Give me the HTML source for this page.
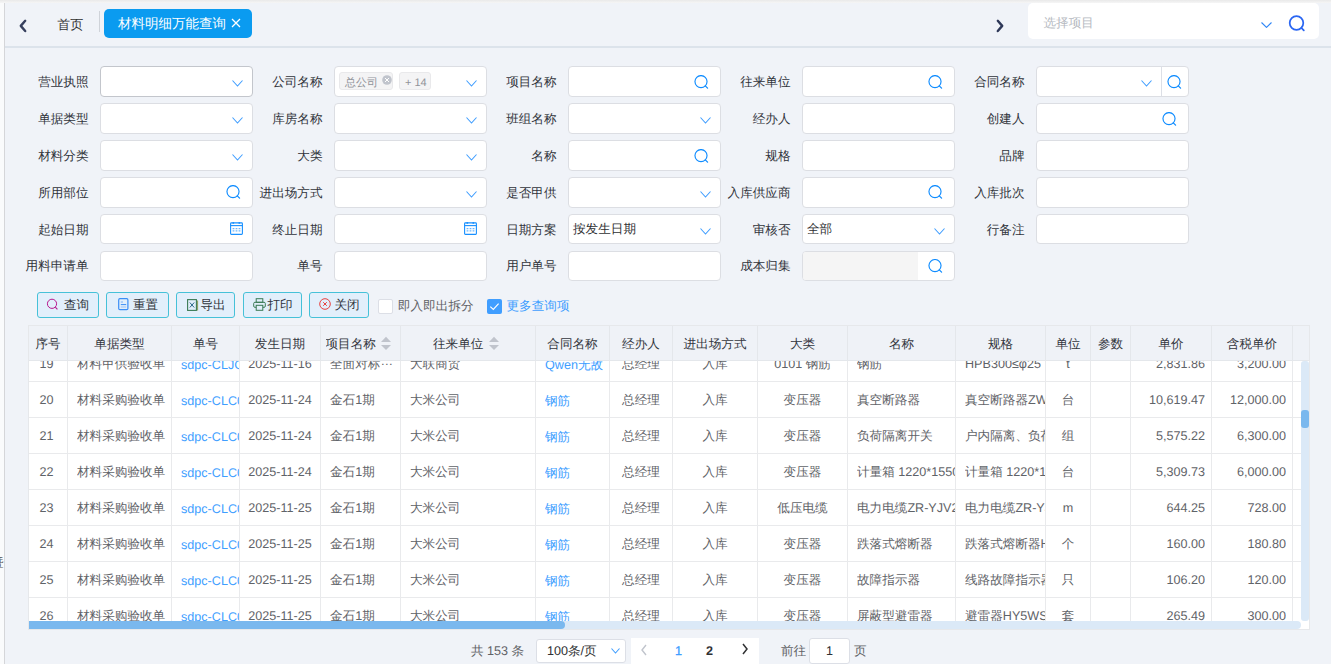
<!DOCTYPE html>
<html><head><meta charset="utf-8"><title>材料明细万能查询</title>
<style>
*{box-sizing:border-box;margin:0;padding:0}
html,body{width:1331px;height:664px;overflow:hidden}
body{text-rendering:geometricPrecision;position:relative;background:#f0f3f8;font-family:"Liberation Sans", sans-serif;font-size:12.6px;color:#3b3f46}
.a{position:absolute}
.c{}
.lbl{position:absolute;text-align:right;white-space:nowrap;font-size:12.6px;color:#30343b;line-height:16px}
.inp{position:absolute;width:153px;height:30.6px;background:#fff;border:1px solid #dcdee3;border-radius:4px}
.th{position:absolute;top:0.8px;height:35px;line-height:35px;text-align:center;color:#33363e;font-size:12.6px;white-space:nowrap;overflow:hidden}
.td{position:absolute;height:36px;line-height:36px;color:#5f6368;font-size:12.6px;white-space:nowrap;overflow:hidden}
.btn{position:absolute;top:292px;height:26px;background:#e2effb;border:1px solid #46c1d8;border-radius:3px;color:#3b3f46;font-size:12.6px;line-height:24px;white-space:nowrap}
</style></head><body>

<div class="a" style="left:0;top:0;width:1331px;height:3px;background:linear-gradient(#e9e9e9,#f6f6f6)"></div>
<div class="a" style="left:0;top:3px;width:4px;height:661px;background:#fafbfc"></div>
<div class="a" style="left:4px;top:3px;width:1px;height:661px;background:#d5d6d9"></div>
<div class="a" style="left:5px;top:46px;width:1326px;height:2px;background:#dce3eb"></div>
<svg class="a" style="left:18px;top:19px" width="10" height="14" viewBox="0 0 10 14"><polyline points="7.2,1.8 2.8,6.9 7.2,12" fill="none" stroke="#37405e" stroke-width="2.4" stroke-linecap="round" stroke-linejoin="round"/></svg>
<div class="a" style="left:57.3px;top:16.3px;font-size:13px;line-height:18px;color:#333"><span class="c">首页</span></div>
<div class="a" style="left:99px;top:11px;width:1px;height:21px;background:#cfd3d9"></div>
<div class="a" style="left:104px;top:9px;width:148px;height:29px;background:#0a9bf0;border-radius:5px"></div>
<div class="a" style="left:118px;top:15px;font-size:13.5px;line-height:18px;color:#fff;white-space:nowrap"><span class="c">材料明细万能查询</span></div>
<svg class="a" style="left:231px;top:18px" width="10" height="10" viewBox="0 0 10 10"><path d="M1 1L9 9M9 1L1 9" stroke="#fff" stroke-width="1.3"/></svg>
<svg class="a" style="left:995px;top:19px" width="10" height="14" viewBox="0 0 10 14"><polyline points="2.8,1.8 7.2,6.9 2.8,12" fill="none" stroke="#2e3858" stroke-width="2.4" stroke-linecap="round" stroke-linejoin="round"/></svg>
<div class="a" style="left:1028px;top:3px;width:291px;height:36px;background:#fff;border-radius:5px"></div>
<div class="a" style="left:1043.5px;top:14.3px;font-size:12.6px;line-height:18px;color:#b6bac1"><span class="c">选择项目</span></div>
<svg style="position:absolute;left:1261px;top:21.6px" width="11" height="6.4" viewBox="0 0 11 6.4"><polyline points="0.5,0.5 5.5,5.4 10.5,0.5" fill="none" stroke="#2f86f6" stroke-width="1.1"/></svg>
<svg class="a" style="left:1287.6px;top:14.8px" width="19" height="19" viewBox="0 0 19 19"><circle cx="8.5" cy="8" r="6.8" fill="none" stroke="#2a66f2" stroke-width="1.75"/><line x1="13.5" y1="13" x2="15.8" y2="15.4" stroke="#2a66f2" stroke-width="1.8" stroke-linecap="round"/></svg>
<div class="lbl" style="left:-20px;width:108.5px;top:73.89999999999999px"><span class="c">营业执照</span></div>
<div class="inp" style="left:100px;top:66.3px;border-color:#c3c6cc"></div>
<svg style="position:absolute;left:232px;top:80.3px" width="11" height="7" viewBox="0 0 11 7"><polyline points="0.5,0.5 5.5,6 10.5,0.5" fill="none" stroke="#409eff" stroke-width="1.1"/></svg>
<div class="lbl" style="left:214px;width:108.5px;top:73.89999999999999px"><span class="c">公司名称</span></div>
<div class="inp" style="left:334px;top:66.3px;border-color:#dcdee3"></div>
<div class="a" style="left:339px;top:72.3px;width:54px;height:18px;background:#f4f4f5;border:1px solid #e9e9eb;border-radius:3px"></div>
<div class="a" style="left:345px;top:75.3px;font-size:11px;line-height:16px;color:#909399"><span class="c">总公司</span></div>
<svg class="a" style="left:382px;top:75.3px" width="10" height="10" viewBox="0 0 10 10"><circle cx="5" cy="5" r="4.8" fill="#c0c4cc"/><path d="M3 3L7 7M7 3L3 7" stroke="#fff" stroke-width="1"/></svg>
<div class="a" style="left:399px;top:72.3px;width:32px;height:18px;background:#f4f4f5;border:1px solid #e9e9eb;border-radius:3px"></div>
<div class="a" style="left:405px;top:75.3px;font-size:11px;line-height:16px;color:#909399">+ 14</div>
<svg style="position:absolute;left:466px;top:80.3px" width="11" height="7" viewBox="0 0 11 7"><polyline points="0.5,0.5 5.5,6 10.5,0.5" fill="none" stroke="#409eff" stroke-width="1.1"/></svg>
<div class="lbl" style="left:448px;width:108.5px;top:73.89999999999999px"><span class="c">项目名称</span></div>
<div class="inp" style="left:568px;top:66.3px;border-color:#dcdee3"></div>
<svg style="position:absolute;left:694.3px;top:74.7px" width="16" height="16" viewBox="0 0 16 16"><circle cx="7.0" cy="6.6" r="6.05" fill="none" stroke="#0f8cff" stroke-width="1.15"/><line x1="11.277954999999999" y1="10.877955" x2="13.577955" y2="13.177955" stroke="#0f8cff" stroke-width="1.25" stroke-linecap="round"/></svg>
<div class="lbl" style="left:682px;width:108.5px;top:73.89999999999999px"><span class="c">往来单位</span></div>
<div class="inp" style="left:802px;top:66.3px;border-color:#dcdee3"></div>
<svg style="position:absolute;left:928.3px;top:74.7px" width="16" height="16" viewBox="0 0 16 16"><circle cx="7.0" cy="6.6" r="6.05" fill="none" stroke="#0f8cff" stroke-width="1.15"/><line x1="11.277954999999999" y1="10.877955" x2="13.577955" y2="13.177955" stroke="#0f8cff" stroke-width="1.25" stroke-linecap="round"/></svg>
<div class="lbl" style="left:916px;width:108.5px;top:73.89999999999999px"><span class="c">合同名称</span></div>
<div class="inp" style="left:1036px;top:66.3px;border-color:#dcdee3"></div>
<div class="a" style="left:1161px;top:66.3px;width:1px;height:30px;background:#dcdfe6"></div>
<svg style="position:absolute;left:1141px;top:80.3px" width="11" height="7" viewBox="0 0 11 7"><polyline points="0.5,0.5 5.5,6 10.5,0.5" fill="none" stroke="#409eff" stroke-width="1.1"/></svg>
<svg style="position:absolute;left:1167px;top:74.5px" width="16" height="16" viewBox="0 0 16 16"><circle cx="7.0" cy="6.6" r="6.05" fill="none" stroke="#0f8cff" stroke-width="1.15"/><line x1="11.277954999999999" y1="10.877955" x2="13.577955" y2="13.177955" stroke="#0f8cff" stroke-width="1.25" stroke-linecap="round"/></svg>
<div class="lbl" style="left:-20px;width:108.5px;top:110.8px"><span class="c">单据类型</span></div>
<div class="inp" style="left:100px;top:103.2px;border-color:#dcdee3"></div>
<svg style="position:absolute;left:232px;top:117.2px" width="11" height="7" viewBox="0 0 11 7"><polyline points="0.5,0.5 5.5,6 10.5,0.5" fill="none" stroke="#409eff" stroke-width="1.1"/></svg>
<div class="lbl" style="left:214px;width:108.5px;top:110.8px"><span class="c">库房名称</span></div>
<div class="inp" style="left:334px;top:103.2px;border-color:#dcdee3"></div>
<svg style="position:absolute;left:466px;top:117.2px" width="11" height="7" viewBox="0 0 11 7"><polyline points="0.5,0.5 5.5,6 10.5,0.5" fill="none" stroke="#409eff" stroke-width="1.1"/></svg>
<div class="lbl" style="left:448px;width:108.5px;top:110.8px"><span class="c">班组名称</span></div>
<div class="inp" style="left:568px;top:103.2px;border-color:#dcdee3"></div>
<svg style="position:absolute;left:700px;top:117.2px" width="11" height="7" viewBox="0 0 11 7"><polyline points="0.5,0.5 5.5,6 10.5,0.5" fill="none" stroke="#409eff" stroke-width="1.1"/></svg>
<div class="lbl" style="left:682px;width:108.5px;top:110.8px"><span class="c">经办人</span></div>
<div class="inp" style="left:802px;top:103.2px;border-color:#dcdee3"></div>
<div class="lbl" style="left:916px;width:108.5px;top:110.8px"><span class="c">创建人</span></div>
<div class="inp" style="left:1036px;top:103.2px;border-color:#dcdee3"></div>
<svg style="position:absolute;left:1162.3px;top:111.60000000000001px" width="16" height="16" viewBox="0 0 16 16"><circle cx="7.0" cy="6.6" r="6.05" fill="none" stroke="#0f8cff" stroke-width="1.15"/><line x1="11.277954999999999" y1="10.877955" x2="13.577955" y2="13.177955" stroke="#0f8cff" stroke-width="1.25" stroke-linecap="round"/></svg>
<div class="lbl" style="left:-20px;width:108.5px;top:147.7px"><span class="c">材料分类</span></div>
<div class="inp" style="left:100px;top:140.1px;border-color:#dcdee3"></div>
<svg style="position:absolute;left:232px;top:154.1px" width="11" height="7" viewBox="0 0 11 7"><polyline points="0.5,0.5 5.5,6 10.5,0.5" fill="none" stroke="#409eff" stroke-width="1.1"/></svg>
<div class="lbl" style="left:214px;width:108.5px;top:147.7px"><span class="c">大类</span></div>
<div class="inp" style="left:334px;top:140.1px;border-color:#dcdee3"></div>
<svg style="position:absolute;left:466px;top:154.1px" width="11" height="7" viewBox="0 0 11 7"><polyline points="0.5,0.5 5.5,6 10.5,0.5" fill="none" stroke="#409eff" stroke-width="1.1"/></svg>
<div class="lbl" style="left:448px;width:108.5px;top:147.7px"><span class="c">名称</span></div>
<div class="inp" style="left:568px;top:140.1px;border-color:#dcdee3"></div>
<svg style="position:absolute;left:694.3px;top:148.5px" width="16" height="16" viewBox="0 0 16 16"><circle cx="7.0" cy="6.6" r="6.05" fill="none" stroke="#0f8cff" stroke-width="1.15"/><line x1="11.277954999999999" y1="10.877955" x2="13.577955" y2="13.177955" stroke="#0f8cff" stroke-width="1.25" stroke-linecap="round"/></svg>
<div class="lbl" style="left:682px;width:108.5px;top:147.7px"><span class="c">规格</span></div>
<div class="inp" style="left:802px;top:140.1px;border-color:#dcdee3"></div>
<div class="lbl" style="left:916px;width:108.5px;top:147.7px"><span class="c">品牌</span></div>
<div class="inp" style="left:1036px;top:140.1px;border-color:#dcdee3"></div>
<div class="lbl" style="left:-20px;width:108.5px;top:184.6px"><span class="c">所用部位</span></div>
<div class="inp" style="left:100px;top:177.0px;border-color:#dcdee3"></div>
<svg style="position:absolute;left:226.3px;top:185.4px" width="16" height="16" viewBox="0 0 16 16"><circle cx="7.0" cy="6.6" r="6.05" fill="none" stroke="#0f8cff" stroke-width="1.15"/><line x1="11.277954999999999" y1="10.877955" x2="13.577955" y2="13.177955" stroke="#0f8cff" stroke-width="1.25" stroke-linecap="round"/></svg>
<div class="lbl" style="left:214px;width:108.5px;top:184.6px"><span class="c">进出场方式</span></div>
<div class="inp" style="left:334px;top:177.0px;border-color:#dcdee3"></div>
<svg style="position:absolute;left:466px;top:191.0px" width="11" height="7" viewBox="0 0 11 7"><polyline points="0.5,0.5 5.5,6 10.5,0.5" fill="none" stroke="#409eff" stroke-width="1.1"/></svg>
<div class="lbl" style="left:448px;width:108.5px;top:184.6px"><span class="c">是否甲供</span></div>
<div class="inp" style="left:568px;top:177.0px;border-color:#dcdee3"></div>
<svg style="position:absolute;left:700px;top:191.0px" width="11" height="7" viewBox="0 0 11 7"><polyline points="0.5,0.5 5.5,6 10.5,0.5" fill="none" stroke="#409eff" stroke-width="1.1"/></svg>
<div class="lbl" style="left:682px;width:108.5px;top:184.6px"><span class="c">入库供应商</span></div>
<div class="inp" style="left:802px;top:177.0px;border-color:#dcdee3"></div>
<svg style="position:absolute;left:928.3px;top:185.4px" width="16" height="16" viewBox="0 0 16 16"><circle cx="7.0" cy="6.6" r="6.05" fill="none" stroke="#0f8cff" stroke-width="1.15"/><line x1="11.277954999999999" y1="10.877955" x2="13.577955" y2="13.177955" stroke="#0f8cff" stroke-width="1.25" stroke-linecap="round"/></svg>
<div class="lbl" style="left:916px;width:108.5px;top:184.6px"><span class="c">入库批次</span></div>
<div class="inp" style="left:1036px;top:177.0px;border-color:#dcdee3"></div>
<div class="lbl" style="left:-20px;width:108.5px;top:221.5px"><span class="c">起始日期</span></div>
<div class="inp" style="left:100px;top:213.9px;border-color:#dcdee3"></div>
<svg style="position:absolute;left:230.4px;top:221.6px" width="13" height="13" viewBox="0 0 13 13"><rect x="0.6" y="0.9" width="11.8" height="11.5" rx="0.8" fill="none" stroke="#1890ff" stroke-width="1.1"/><line x1="0.6" y1="3.6" x2="12.4" y2="3.6" stroke="#1890ff" stroke-width="1.1"/><circle cx="3.3" cy="0.9" r="0.9" fill="#1890ff"/><circle cx="9.3" cy="0.9" r="0.9" fill="#1890ff"/><g fill="#1890ff" opacity="0.8"><rect x="2.6" y="6.2" width="1.8" height="1"/><rect x="5.6" y="6.2" width="1.8" height="1"/><rect x="8.6" y="6.2" width="1.8" height="1"/><rect x="2.6" y="8.4" width="1.8" height="1"/><rect x="5.6" y="8.4" width="1.8" height="1"/><rect x="8.6" y="8.4" width="1.8" height="1"/></g></svg>
<div class="lbl" style="left:214px;width:108.5px;top:221.5px"><span class="c">终止日期</span></div>
<div class="inp" style="left:334px;top:213.9px;border-color:#dcdee3"></div>
<svg style="position:absolute;left:464.4px;top:221.6px" width="13" height="13" viewBox="0 0 13 13"><rect x="0.6" y="0.9" width="11.8" height="11.5" rx="0.8" fill="none" stroke="#1890ff" stroke-width="1.1"/><line x1="0.6" y1="3.6" x2="12.4" y2="3.6" stroke="#1890ff" stroke-width="1.1"/><circle cx="3.3" cy="0.9" r="0.9" fill="#1890ff"/><circle cx="9.3" cy="0.9" r="0.9" fill="#1890ff"/><g fill="#1890ff" opacity="0.8"><rect x="2.6" y="6.2" width="1.8" height="1"/><rect x="5.6" y="6.2" width="1.8" height="1"/><rect x="8.6" y="6.2" width="1.8" height="1"/><rect x="2.6" y="8.4" width="1.8" height="1"/><rect x="5.6" y="8.4" width="1.8" height="1"/><rect x="8.6" y="8.4" width="1.8" height="1"/></g></svg>
<div class="lbl" style="left:448px;width:108.5px;top:221.5px"><span class="c">日期方案</span></div>
<div class="inp" style="left:568px;top:213.9px;border-color:#dcdee3"></div>
<div class="a" style="left:573px;top:220.9px;font-size:12.6px;line-height:16px;color:#303133"><span class="c">按发生日期</span></div>
<svg style="position:absolute;left:700px;top:227.9px" width="11" height="7" viewBox="0 0 11 7"><polyline points="0.5,0.5 5.5,6 10.5,0.5" fill="none" stroke="#409eff" stroke-width="1.1"/></svg>
<div class="lbl" style="left:682px;width:108.5px;top:221.5px"><span class="c">审核否</span></div>
<div class="inp" style="left:802px;top:213.9px;border-color:#dcdee3"></div>
<div class="a" style="left:807px;top:220.9px;font-size:12.6px;line-height:16px;color:#303133"><span class="c">全部</span></div>
<svg style="position:absolute;left:934px;top:227.9px" width="11" height="7" viewBox="0 0 11 7"><polyline points="0.5,0.5 5.5,6 10.5,0.5" fill="none" stroke="#409eff" stroke-width="1.1"/></svg>
<div class="lbl" style="left:916px;width:108.5px;top:221.5px"><span class="c">行备注</span></div>
<div class="inp" style="left:1036px;top:213.9px;border-color:#dcdee3"></div>
<div class="lbl" style="left:-20px;width:108.5px;top:258.40000000000003px"><span class="c">用料申请单</span></div>
<div class="inp" style="left:100px;top:250.8px;border-color:#dcdee3"></div>
<div class="lbl" style="left:214px;width:108.5px;top:258.40000000000003px"><span class="c">单号</span></div>
<div class="inp" style="left:334px;top:250.8px;border-color:#dcdee3"></div>
<div class="lbl" style="left:448px;width:108.5px;top:258.40000000000003px"><span class="c">用户单号</span></div>
<div class="inp" style="left:568px;top:250.8px;border-color:#dcdee3"></div>
<div class="lbl" style="left:682px;width:108.5px;top:258.40000000000003px"><span class="c">成本归集</span></div>
<div class="inp" style="left:802px;top:250.8px;border-color:#dcdee3;overflow:hidden"><div class="a" style="left:0;top:0;width:115px;height:28px;background:#f5f5f5"></div></div>
<svg style="position:absolute;left:928px;top:259.40000000000003px" width="16" height="16" viewBox="0 0 16 16"><circle cx="7.0" cy="6.6" r="6.05" fill="none" stroke="#0f8cff" stroke-width="1.15"/><line x1="11.277954999999999" y1="10.877955" x2="13.577955" y2="13.177955" stroke="#0f8cff" stroke-width="1.25" stroke-linecap="round"/></svg>
<div class="btn" style="left:37px;width:62px"></div>
<div class="btn" style="left:106px;width:63px"></div>
<div class="btn" style="left:176px;width:59px"></div>
<div class="btn" style="left:243px;width:59px"></div>
<div class="btn" style="left:309px;width:60px"></div>
<div class="a" style="left:64px;top:296.6px;font-size:12.6px;line-height:16px;color:#30343b"><span class="c">查询</span></div>
<div class="a" style="left:133px;top:296.6px;font-size:12.6px;line-height:16px;color:#30343b"><span class="c">重置</span></div>
<div class="a" style="left:200.5px;top:296.6px;font-size:12.6px;line-height:16px;color:#30343b"><span class="c">导出</span></div>
<div class="a" style="left:267.5px;top:296.6px;font-size:12.6px;line-height:16px;color:#30343b"><span class="c">打印</span></div>
<div class="a" style="left:334.5px;top:296.6px;font-size:12.6px;line-height:16px;color:#30343b"><span class="c">关闭</span></div>
<svg class="a" style="left:46px;top:297.5px" width="13" height="13" viewBox="0 0 13 13"><circle cx="6" cy="5.8" r="4.6" fill="none" stroke="#b8198f" stroke-width="1"/><line x1="9.3" y1="9.1" x2="11.4" y2="11.3" stroke="#b8198f" stroke-width="1.1"/></svg>
<svg class="a" style="left:117.5px;top:297.5px" width="11" height="13" viewBox="0 0 11 13"><rect x="0.7" y="0.7" width="9.2" height="11" rx="1.2" fill="none" stroke="#3b8ef6" stroke-width="1.2"/><line x1="2.8" y1="4" x2="5" y2="4" stroke="#7fb2f7" stroke-width="1"/><line x1="2.8" y1="6.6" x2="8.2" y2="6.6" stroke="#3b8ef6" stroke-width="1"/><line x1="2.8" y1="9" x2="8.2" y2="9" stroke="#9cc3f7" stroke-width="1"/></svg>
<svg class="a" style="left:186.5px;top:298.5px" width="12" height="12" viewBox="0 0 12 12"><rect x="0.6" y="0.6" width="8.8" height="10.8" fill="none" stroke="#3a7a55" stroke-width="1.1"/><line x1="10.6" y1="1.5" x2="10.6" y2="11.5" stroke="#8a9a5a" stroke-width="1"/><path d="M2.8 3.5L7.2 8.5M7.2 3.5L2.8 8.5" stroke="#2d6a8a" stroke-width="1"/></svg>
<svg class="a" style="left:252.5px;top:297.5px" width="13" height="13" viewBox="0 0 13 13"><rect x="3.2" y="0.7" width="6.6" height="3.6" fill="none" stroke="#3a7a55" stroke-width="1"/><rect x="0.7" y="4.3" width="11.6" height="5" rx="1.2" fill="none" stroke="#3a7a55" stroke-width="1"/><rect x="3.2" y="7.3" width="6.6" height="5" fill="#e2effb" stroke="#3a7a55" stroke-width="1"/></svg>
<svg class="a" style="left:319px;top:298px" width="12" height="12" viewBox="0 0 12 12"><circle cx="6" cy="6" r="5.3" fill="none" stroke="#e8413f" stroke-width="1"/><path d="M4.2 4.2L7.8 7.8M7.8 4.2L4.2 7.8" stroke="#e8413f" stroke-width="1"/></svg>
<div class="a" style="left:378px;top:299px;width:15px;height:15px;background:#fff;border:1px solid #dcdfe6;border-radius:2px"></div>
<div class="a" style="left:398px;top:297.5px;font-size:12.6px;line-height:16px;color:#606266"><span class="c">即入即出拆分</span></div>
<div class="a" style="left:487px;top:299px;width:15px;height:15px;background:#409eff;border-radius:2px"></div>
<svg class="a" style="left:487px;top:299px" width="15" height="15" viewBox="0 0 15 15"><polyline points="3.3,7.6 6.3,10.4 11.6,4.6" fill="none" stroke="#fff" stroke-width="1.15"/></svg>
<div class="a" style="left:506.5px;top:297.5px;font-size:12.6px;line-height:16px;color:#409eff"><span class="c">更多查询项</span></div>
<div class="a" style="left:28px;top:325px;width:1282px;height:305px;background:#fff;border:1px solid #e6e8eb;overflow:hidden">
<div class="a" style="left:0;top:55px;width:1300px;height:1px;background:#e9eaec"></div>
<div class="td" style="text-align:center;left:-1.5px;width:38px;top:20px;color:#5f6368">19</div>
<div class="td" style="text-align:left;left:48px;width:94px;top:20px;color:#5f6368"><span class="c">材料甲供验收单</span></div>
<div class="td" style="text-align:left;left:152px;width:58px;top:21px;color:#409eff">sdpc-CLJC025</div>
<div class="td" style="text-align:center;left:211px;width:80px;top:20px;color:#5f6368">2025-11-16</div>
<div class="td" style="text-align:left;left:301px;width:70px;top:20px;color:#5f6368"><span class="c">全面对标</span><span style="position:relative;top:-3px;letter-spacing:-1px">…</span></div>
<div class="td" style="text-align:left;left:381px;width:125px;top:20px;color:#5f6368"><span class="c">大联商贸</span></div>
<div class="td" style="text-align:left;left:516px;width:64px;top:21px;color:#409eff">Qwen<span class="c">无敌</span></div>
<div class="td" style="text-align:center;left:581px;width:62px;top:20px;color:#5f6368"><span class="c">总经理</span></div>
<div class="td" style="text-align:center;left:644px;width:84px;top:20px;color:#5f6368"><span class="c">入库</span></div>
<div class="td" style="text-align:center;left:729px;width:89px;top:20px;color:#5f6368">0101 <span class="c">钢筋</span></div>
<div class="td" style="text-align:left;left:828px;width:98px;top:20px;color:#5f6368"><span class="c">钢筋</span></div>
<div class="td" style="text-align:left;left:936px;width:80px;top:20px;color:#5f6368">HPB300≤φ25</div>
<div class="td" style="text-align:center;left:1017px;width:44px;top:20px;color:#5f6368">t</div>
<div class="td" style="text-align:center;left:1062px;width:39px;top:20px;color:#5f6368"></div>
<div class="td" style="text-align:right;left:1102px;width:74px;top:20px;color:#5f6368">2,831.86</div>
<div class="td" style="text-align:right;left:1183px;width:74px;top:20px;color:#5f6368">3,200.00</div>
<div class="a" style="left:0;top:91px;width:1300px;height:1px;background:#e9eaec"></div>
<div class="td" style="text-align:center;left:-1.5px;width:38px;top:56px;color:#5f6368">20</div>
<div class="td" style="text-align:left;left:48px;width:94px;top:56px;color:#5f6368"><span class="c">材料采购验收单</span></div>
<div class="td" style="text-align:left;left:152px;width:58px;top:57px;color:#409eff">sdpc-CLC0025</div>
<div class="td" style="text-align:center;left:211px;width:80px;top:56px;color:#5f6368">2025-11-24</div>
<div class="td" style="text-align:left;left:301px;width:70px;top:56px;color:#5f6368"><span class="c">金石</span>1<span class="c">期</span></div>
<div class="td" style="text-align:left;left:381px;width:125px;top:56px;color:#5f6368"><span class="c">大米公司</span></div>
<div class="td" style="text-align:left;left:516px;width:64px;top:57px;color:#409eff"><span class="c">钢筋</span></div>
<div class="td" style="text-align:center;left:581px;width:62px;top:56px;color:#5f6368"><span class="c">总经理</span></div>
<div class="td" style="text-align:center;left:644px;width:84px;top:56px;color:#5f6368"><span class="c">入库</span></div>
<div class="td" style="text-align:center;left:729px;width:89px;top:56px;color:#5f6368"><span class="c">变压器</span></div>
<div class="td" style="text-align:left;left:828px;width:98px;top:56px;color:#5f6368"><span class="c">真空断路器</span></div>
<div class="td" style="text-align:left;left:936px;width:80px;top:56px;color:#5f6368"><span class="c">真空断路器</span>ZW32</div>
<div class="td" style="text-align:center;left:1017px;width:44px;top:56px;color:#5f6368"><span class="c">台</span></div>
<div class="td" style="text-align:center;left:1062px;width:39px;top:56px;color:#5f6368"></div>
<div class="td" style="text-align:right;left:1102px;width:74px;top:56px;color:#5f6368">10,619.47</div>
<div class="td" style="text-align:right;left:1183px;width:74px;top:56px;color:#5f6368">12,000.00</div>
<div class="a" style="left:0;top:127px;width:1300px;height:1px;background:#e9eaec"></div>
<div class="td" style="text-align:center;left:-1.5px;width:38px;top:92px;color:#5f6368">21</div>
<div class="td" style="text-align:left;left:48px;width:94px;top:92px;color:#5f6368"><span class="c">材料采购验收单</span></div>
<div class="td" style="text-align:left;left:152px;width:58px;top:93px;color:#409eff">sdpc-CLC0025</div>
<div class="td" style="text-align:center;left:211px;width:80px;top:92px;color:#5f6368">2025-11-24</div>
<div class="td" style="text-align:left;left:301px;width:70px;top:92px;color:#5f6368"><span class="c">金石</span>1<span class="c">期</span></div>
<div class="td" style="text-align:left;left:381px;width:125px;top:92px;color:#5f6368"><span class="c">大米公司</span></div>
<div class="td" style="text-align:left;left:516px;width:64px;top:93px;color:#409eff"><span class="c">钢筋</span></div>
<div class="td" style="text-align:center;left:581px;width:62px;top:92px;color:#5f6368"><span class="c">总经理</span></div>
<div class="td" style="text-align:center;left:644px;width:84px;top:92px;color:#5f6368"><span class="c">入库</span></div>
<div class="td" style="text-align:center;left:729px;width:89px;top:92px;color:#5f6368"><span class="c">变压器</span></div>
<div class="td" style="text-align:left;left:828px;width:98px;top:92px;color:#5f6368"><span class="c">负荷隔离开关</span></div>
<div class="td" style="text-align:left;left:936px;width:80px;top:92px;color:#5f6368"><span class="c">户内隔离、负荷开关</span></div>
<div class="td" style="text-align:center;left:1017px;width:44px;top:92px;color:#5f6368"><span class="c">组</span></div>
<div class="td" style="text-align:center;left:1062px;width:39px;top:92px;color:#5f6368"></div>
<div class="td" style="text-align:right;left:1102px;width:74px;top:92px;color:#5f6368">5,575.22</div>
<div class="td" style="text-align:right;left:1183px;width:74px;top:92px;color:#5f6368">6,300.00</div>
<div class="a" style="left:0;top:163px;width:1300px;height:1px;background:#e9eaec"></div>
<div class="td" style="text-align:center;left:-1.5px;width:38px;top:128px;color:#5f6368">22</div>
<div class="td" style="text-align:left;left:48px;width:94px;top:128px;color:#5f6368"><span class="c">材料采购验收单</span></div>
<div class="td" style="text-align:left;left:152px;width:58px;top:129px;color:#409eff">sdpc-CLC0025</div>
<div class="td" style="text-align:center;left:211px;width:80px;top:128px;color:#5f6368">2025-11-24</div>
<div class="td" style="text-align:left;left:301px;width:70px;top:128px;color:#5f6368"><span class="c">金石</span>1<span class="c">期</span></div>
<div class="td" style="text-align:left;left:381px;width:125px;top:128px;color:#5f6368"><span class="c">大米公司</span></div>
<div class="td" style="text-align:left;left:516px;width:64px;top:129px;color:#409eff"><span class="c">钢筋</span></div>
<div class="td" style="text-align:center;left:581px;width:62px;top:128px;color:#5f6368"><span class="c">总经理</span></div>
<div class="td" style="text-align:center;left:644px;width:84px;top:128px;color:#5f6368"><span class="c">入库</span></div>
<div class="td" style="text-align:center;left:729px;width:89px;top:128px;color:#5f6368"><span class="c">变压器</span></div>
<div class="td" style="text-align:left;left:828px;width:98px;top:128px;color:#5f6368"><span class="c">计量箱</span> 1220*1550</div>
<div class="td" style="text-align:left;left:936px;width:80px;top:128px;color:#5f6368"><span class="c">计量箱</span> 1220*1550</div>
<div class="td" style="text-align:center;left:1017px;width:44px;top:128px;color:#5f6368"><span class="c">台</span></div>
<div class="td" style="text-align:center;left:1062px;width:39px;top:128px;color:#5f6368"></div>
<div class="td" style="text-align:right;left:1102px;width:74px;top:128px;color:#5f6368">5,309.73</div>
<div class="td" style="text-align:right;left:1183px;width:74px;top:128px;color:#5f6368">6,000.00</div>
<div class="a" style="left:0;top:199px;width:1300px;height:1px;background:#e9eaec"></div>
<div class="td" style="text-align:center;left:-1.5px;width:38px;top:164px;color:#5f6368">23</div>
<div class="td" style="text-align:left;left:48px;width:94px;top:164px;color:#5f6368"><span class="c">材料采购验收单</span></div>
<div class="td" style="text-align:left;left:152px;width:58px;top:165px;color:#409eff">sdpc-CLC0025</div>
<div class="td" style="text-align:center;left:211px;width:80px;top:164px;color:#5f6368">2025-11-25</div>
<div class="td" style="text-align:left;left:301px;width:70px;top:164px;color:#5f6368"><span class="c">金石</span>1<span class="c">期</span></div>
<div class="td" style="text-align:left;left:381px;width:125px;top:164px;color:#5f6368"><span class="c">大米公司</span></div>
<div class="td" style="text-align:left;left:516px;width:64px;top:165px;color:#409eff"><span class="c">钢筋</span></div>
<div class="td" style="text-align:center;left:581px;width:62px;top:164px;color:#5f6368"><span class="c">总经理</span></div>
<div class="td" style="text-align:center;left:644px;width:84px;top:164px;color:#5f6368"><span class="c">入库</span></div>
<div class="td" style="text-align:center;left:729px;width:89px;top:164px;color:#5f6368"><span class="c">低压电缆</span></div>
<div class="td" style="text-align:left;left:828px;width:98px;top:164px;color:#5f6368"><span class="c">电力电缆</span>ZR-YJV22</div>
<div class="td" style="text-align:left;left:936px;width:80px;top:164px;color:#5f6368"><span class="c">电力电缆</span>ZR-YJV22</div>
<div class="td" style="text-align:center;left:1017px;width:44px;top:164px;color:#5f6368">m</div>
<div class="td" style="text-align:center;left:1062px;width:39px;top:164px;color:#5f6368"></div>
<div class="td" style="text-align:right;left:1102px;width:74px;top:164px;color:#5f6368">644.25</div>
<div class="td" style="text-align:right;left:1183px;width:74px;top:164px;color:#5f6368">728.00</div>
<div class="a" style="left:0;top:235px;width:1300px;height:1px;background:#e9eaec"></div>
<div class="td" style="text-align:center;left:-1.5px;width:38px;top:200px;color:#5f6368">24</div>
<div class="td" style="text-align:left;left:48px;width:94px;top:200px;color:#5f6368"><span class="c">材料采购验收单</span></div>
<div class="td" style="text-align:left;left:152px;width:58px;top:201px;color:#409eff">sdpc-CLC0025</div>
<div class="td" style="text-align:center;left:211px;width:80px;top:200px;color:#5f6368">2025-11-25</div>
<div class="td" style="text-align:left;left:301px;width:70px;top:200px;color:#5f6368"><span class="c">金石</span>1<span class="c">期</span></div>
<div class="td" style="text-align:left;left:381px;width:125px;top:200px;color:#5f6368"><span class="c">大米公司</span></div>
<div class="td" style="text-align:left;left:516px;width:64px;top:201px;color:#409eff"><span class="c">钢筋</span></div>
<div class="td" style="text-align:center;left:581px;width:62px;top:200px;color:#5f6368"><span class="c">总经理</span></div>
<div class="td" style="text-align:center;left:644px;width:84px;top:200px;color:#5f6368"><span class="c">入库</span></div>
<div class="td" style="text-align:center;left:729px;width:89px;top:200px;color:#5f6368"><span class="c">变压器</span></div>
<div class="td" style="text-align:left;left:828px;width:98px;top:200px;color:#5f6368"><span class="c">跌落式熔断器</span></div>
<div class="td" style="text-align:left;left:936px;width:80px;top:200px;color:#5f6368"><span class="c">跌落式熔断器</span>HRW</div>
<div class="td" style="text-align:center;left:1017px;width:44px;top:200px;color:#5f6368"><span class="c">个</span></div>
<div class="td" style="text-align:center;left:1062px;width:39px;top:200px;color:#5f6368"></div>
<div class="td" style="text-align:right;left:1102px;width:74px;top:200px;color:#5f6368">160.00</div>
<div class="td" style="text-align:right;left:1183px;width:74px;top:200px;color:#5f6368">180.80</div>
<div class="a" style="left:0;top:271px;width:1300px;height:1px;background:#e9eaec"></div>
<div class="td" style="text-align:center;left:-1.5px;width:38px;top:236px;color:#5f6368">25</div>
<div class="td" style="text-align:left;left:48px;width:94px;top:236px;color:#5f6368"><span class="c">材料采购验收单</span></div>
<div class="td" style="text-align:left;left:152px;width:58px;top:237px;color:#409eff">sdpc-CLC0025</div>
<div class="td" style="text-align:center;left:211px;width:80px;top:236px;color:#5f6368">2025-11-25</div>
<div class="td" style="text-align:left;left:301px;width:70px;top:236px;color:#5f6368"><span class="c">金石</span>1<span class="c">期</span></div>
<div class="td" style="text-align:left;left:381px;width:125px;top:236px;color:#5f6368"><span class="c">大米公司</span></div>
<div class="td" style="text-align:left;left:516px;width:64px;top:237px;color:#409eff"><span class="c">钢筋</span></div>
<div class="td" style="text-align:center;left:581px;width:62px;top:236px;color:#5f6368"><span class="c">总经理</span></div>
<div class="td" style="text-align:center;left:644px;width:84px;top:236px;color:#5f6368"><span class="c">入库</span></div>
<div class="td" style="text-align:center;left:729px;width:89px;top:236px;color:#5f6368"><span class="c">变压器</span></div>
<div class="td" style="text-align:left;left:828px;width:98px;top:236px;color:#5f6368"><span class="c">故障指示器</span></div>
<div class="td" style="text-align:left;left:936px;width:80px;top:236px;color:#5f6368"><span class="c">线路故障指示器</span></div>
<div class="td" style="text-align:center;left:1017px;width:44px;top:236px;color:#5f6368"><span class="c">只</span></div>
<div class="td" style="text-align:center;left:1062px;width:39px;top:236px;color:#5f6368"></div>
<div class="td" style="text-align:right;left:1102px;width:74px;top:236px;color:#5f6368">106.20</div>
<div class="td" style="text-align:right;left:1183px;width:74px;top:236px;color:#5f6368">120.00</div>
<div class="a" style="left:0;top:307px;width:1300px;height:1px;background:#e9eaec"></div>
<div class="td" style="text-align:center;left:-1.5px;width:38px;top:272px;color:#5f6368">26</div>
<div class="td" style="text-align:left;left:48px;width:94px;top:272px;color:#5f6368"><span class="c">材料采购验收单</span></div>
<div class="td" style="text-align:left;left:152px;width:58px;top:273px;color:#409eff">sdpc-CLC0025</div>
<div class="td" style="text-align:center;left:211px;width:80px;top:272px;color:#5f6368">2025-11-25</div>
<div class="td" style="text-align:left;left:301px;width:70px;top:272px;color:#5f6368"><span class="c">金石</span>1<span class="c">期</span></div>
<div class="td" style="text-align:left;left:381px;width:125px;top:272px;color:#5f6368"><span class="c">大米公司</span></div>
<div class="td" style="text-align:left;left:516px;width:64px;top:273px;color:#409eff"><span class="c">钢筋</span></div>
<div class="td" style="text-align:center;left:581px;width:62px;top:272px;color:#5f6368"><span class="c">总经理</span></div>
<div class="td" style="text-align:center;left:644px;width:84px;top:272px;color:#5f6368"><span class="c">入库</span></div>
<div class="td" style="text-align:center;left:729px;width:89px;top:272px;color:#5f6368"><span class="c">变压器</span></div>
<div class="td" style="text-align:left;left:828px;width:98px;top:272px;color:#5f6368"><span class="c">屏蔽型避雷器</span></div>
<div class="td" style="text-align:left;left:936px;width:80px;top:272px;color:#5f6368"><span class="c">避雷器</span>HY5WS</div>
<div class="td" style="text-align:center;left:1017px;width:44px;top:272px;color:#5f6368"><span class="c">套</span></div>
<div class="td" style="text-align:center;left:1062px;width:39px;top:272px;color:#5f6368"></div>
<div class="td" style="text-align:right;left:1102px;width:74px;top:272px;color:#5f6368">265.49</div>
<div class="td" style="text-align:right;left:1183px;width:74px;top:272px;color:#5f6368">300.00</div>
<div class="a" style="left:38px;top:0;width:1px;height:305px;background:#e9eaec"></div>
<div class="a" style="left:142px;top:0;width:1px;height:305px;background:#e9eaec"></div>
<div class="a" style="left:210px;top:0;width:1px;height:305px;background:#e9eaec"></div>
<div class="a" style="left:291px;top:0;width:1px;height:305px;background:#e9eaec"></div>
<div class="a" style="left:371px;top:0;width:1px;height:305px;background:#e9eaec"></div>
<div class="a" style="left:506px;top:0;width:1px;height:305px;background:#e9eaec"></div>
<div class="a" style="left:580px;top:0;width:1px;height:305px;background:#e9eaec"></div>
<div class="a" style="left:643px;top:0;width:1px;height:305px;background:#e9eaec"></div>
<div class="a" style="left:728px;top:0;width:1px;height:305px;background:#e9eaec"></div>
<div class="a" style="left:818px;top:0;width:1px;height:305px;background:#e9eaec"></div>
<div class="a" style="left:926px;top:0;width:1px;height:305px;background:#e9eaec"></div>
<div class="a" style="left:1016px;top:0;width:1px;height:305px;background:#e9eaec"></div>
<div class="a" style="left:1061px;top:0;width:1px;height:305px;background:#e9eaec"></div>
<div class="a" style="left:1101px;top:0;width:1px;height:305px;background:#e9eaec"></div>
<div class="a" style="left:1182px;top:0;width:1px;height:305px;background:#e9eaec"></div>
<div class="a" style="left:1263px;top:0;width:1px;height:305px;background:#e9eaec"></div>
<div class="a" style="left:0;top:0;width:1282px;height:35px;background:#eff2f7;border-bottom:1px solid #e4e7eb"></div>
<div class="th" style="left:0px;width:38px"><span class="c">序号</span></div>
<div class="th" style="left:39px;width:103px"><span class="c">单据类型</span></div>
<div class="th" style="left:143px;width:67px"><span class="c">单号</span></div>
<div class="th" style="left:211px;width:80px"><span class="c">发生日期</span></div>
<div class="th" style="left:296.5px;width:60px;text-align:left"><span class="c">项目名称</span></div>
<div class="th" style="left:404px;width:60px;text-align:left"><span class="c">往来单位</span></div>
<div class="th" style="left:507px;width:73px"><span class="c">合同名称</span></div>
<div class="th" style="left:581px;width:62px"><span class="c">经办人</span></div>
<div class="th" style="left:644px;width:84px"><span class="c">进出场方式</span></div>
<div class="th" style="left:729px;width:89px"><span class="c">大类</span></div>
<div class="th" style="left:819px;width:107px"><span class="c">名称</span></div>
<div class="th" style="left:927px;width:89px"><span class="c">规格</span></div>
<div class="th" style="left:1017px;width:44px"><span class="c">单位</span></div>
<div class="th" style="left:1062px;width:39px"><span class="c">参数</span></div>
<div class="th" style="left:1102px;width:80px"><span class="c">单价</span></div>
<div class="th" style="left:1183px;width:80px"><span class="c">含税单价</span></div>
<div class="a" style="left:38px;top:0;width:1px;height:35px;background:#e4e7eb"></div>
<div class="a" style="left:142px;top:0;width:1px;height:35px;background:#e4e7eb"></div>
<div class="a" style="left:210px;top:0;width:1px;height:35px;background:#e4e7eb"></div>
<div class="a" style="left:291px;top:0;width:1px;height:35px;background:#e4e7eb"></div>
<div class="a" style="left:371px;top:0;width:1px;height:35px;background:#e4e7eb"></div>
<div class="a" style="left:506px;top:0;width:1px;height:35px;background:#e4e7eb"></div>
<div class="a" style="left:580px;top:0;width:1px;height:35px;background:#e4e7eb"></div>
<div class="a" style="left:643px;top:0;width:1px;height:35px;background:#e4e7eb"></div>
<div class="a" style="left:728px;top:0;width:1px;height:35px;background:#e4e7eb"></div>
<div class="a" style="left:818px;top:0;width:1px;height:35px;background:#e4e7eb"></div>
<div class="a" style="left:926px;top:0;width:1px;height:35px;background:#e4e7eb"></div>
<div class="a" style="left:1016px;top:0;width:1px;height:35px;background:#e4e7eb"></div>
<div class="a" style="left:1061px;top:0;width:1px;height:35px;background:#e4e7eb"></div>
<div class="a" style="left:1101px;top:0;width:1px;height:35px;background:#e4e7eb"></div>
<div class="a" style="left:1182px;top:0;width:1px;height:35px;background:#e4e7eb"></div>
<div class="a" style="left:1263px;top:0;width:1px;height:35px;background:#e4e7eb"></div>
<svg class="a" style="left:352px;top:10px" width="10" height="14" viewBox="0 0 10 14"><path d="M5 0.8L10 6H0Z" fill="#c0c4cc"/><path d="M5 13.9L10 8.9H0Z" fill="#c0c4cc"/></svg>
<svg class="a" style="left:460px;top:10px" width="10" height="14" viewBox="0 0 10 14"><path d="M5 0.8L10 6H0Z" fill="#c0c4cc"/><path d="M5 13.9L10 8.9H0Z" fill="#c0c4cc"/></svg>
<div class="a" style="left:1272px;top:35px;width:8px;height:260px;background:#dbe9f7;border-radius:3px"></div>
<div class="a" style="left:1272px;top:84px;width:8px;height:18px;background:#7ab8ee;border-radius:3px"></div>
<div class="a" style="left:0;top:295px;width:1272px;height:8px;background:#dbe9f7;border-radius:0 4px 4px 0"></div>
<div class="a" style="left:0;top:295px;width:536px;height:8px;background:#7ab8ee;border-radius:0 4px 4px 0"></div>
</div>
<div class="a" style="left:471px;top:642px;font-size:12.6px;line-height:18px;color:#606266;white-space:nowrap"><span class="c">共</span> 153 <span class="c">条</span></div>
<div class="a" style="left:536px;top:638.5px;width:89.5px;height:24.5px;background:#fff;border:1px solid #dcdfe6;border-radius:3px"></div>
<div class="a" style="left:547px;top:642px;font-size:12.6px;line-height:18px;color:#303133;white-space:nowrap">100<span class="c">条</span>/<span class="c">页</span></div>
<svg style="position:absolute;left:610.5px;top:647.5px" width="9" height="6" viewBox="0 0 9 6"><polyline points="0.5,0.5 4.5,5 8.5,0.5" fill="none" stroke="#409eff" stroke-width="1.1"/></svg>
<div class="a" style="left:631px;top:638px;width:128px;height:26px;background:#fff"></div>
<svg class="a" style="left:640px;top:644px" width="8" height="12" viewBox="0 0 8 12"><polyline points="6,1 2,6 6,11" fill="none" stroke="#c0c4cc" stroke-width="1.4"/></svg>
<div class="a" style="left:675px;top:642px;font-size:12.6px;line-height:18px;color:#409eff;font-weight:normal;-webkit-text-stroke:0.3px #409eff">1</div>
<div class="a" style="left:706px;top:642px;font-size:12.6px;line-height:18px;color:#303133;font-weight:bold">2</div>
<svg class="a" style="left:741px;top:643px" width="8" height="12" viewBox="0 0 8 12"><polyline points="2,1 6,6 2,11" fill="none" stroke="#303133" stroke-width="1.5"/></svg>
<div class="a" style="left:781px;top:642px;font-size:12.6px;line-height:18px;color:#606266"><span class="c">前往</span></div>
<div class="a" style="left:809px;top:638px;width:41px;height:26px;background:#fff;border:1px solid #dcdfe6;border-radius:3px"></div>
<div class="a" style="left:809px;top:642px;width:41px;text-align:center;font-size:12.6px;line-height:18px;color:#303133">1</div>
<div class="a" style="left:854px;top:642px;font-size:12.6px;line-height:18px;color:#606266"><span class="c">页</span></div>
<div class="a" style="left:-9px;top:554.5px;font-size:12.6px;line-height:16px;color:#555"><span class="c">暨</span></div>
</body></html>
